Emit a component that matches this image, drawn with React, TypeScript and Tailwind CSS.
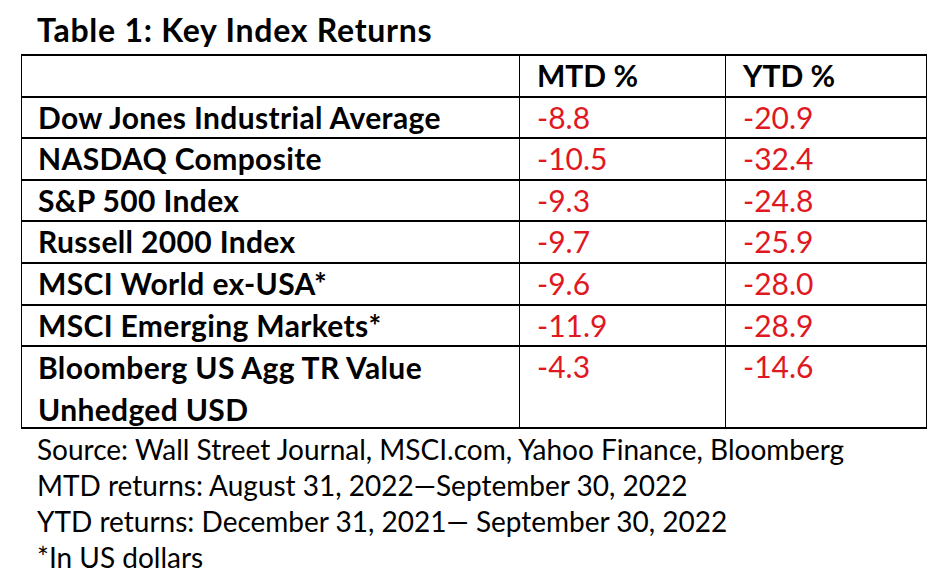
const rows = [
  { name: 'Dow Jones Industrial Average', mtd: '-8.8', ytd: '-20.9' },
  { name: 'NASDAQ Composite', mtd: '-10.5', ytd: '-32.4' },
  { name: 'S&P 500 Index', mtd: '-9.3', ytd: '-24.8' },
  { name: 'Russell 2000 Index', mtd: '-9.7', ytd: '-25.9' },
  { name: 'MSCI World ex-USA*', mtd: '-9.6', ytd: '-28.0' },
  { name: 'MSCI Emerging Markets*', mtd: '-11.9', ytd: '-28.9' },
];

const grid = 'grid grid-cols-[497px_206px_203px] border-b-2 border-black';

export default function App() {
  return (
    <div className="w-[945px] h-[582px] bg-white text-black font-['Lato','Open_Sans',sans-serif] text-[30px]">
      <div className="pl-[37px] pt-[12px] text-[32px] font-bold leading-[36px] tracking-[0.75px]">
        Table 1: Key Index Returns
      </div>

      <div className="mt-[6px] ml-[21px] w-[906px] border-t-2 border-x border-black">
        <div className={grid}>
          <div className="h-[39.6px]" />
          <div className="h-[39.6px] border-l border-black pl-[17px] font-bold leading-[39px]">MTD %</div>
          <div className="h-[39.6px] border-l border-black pl-[17px] font-bold leading-[39px]">YTD %</div>
        </div>

        {rows.map((r) => (
          <div key={r.name} className={grid}>
            <div className="h-[39.6px] pl-[16px] font-bold leading-[39px] tracking-[0.35px]">{r.name}</div>
            <div className="h-[39.6px] border-l border-black pl-[17px] leading-[39px] text-[#e0181f]">{r.mtd}</div>
            <div className="h-[39.6px] border-l border-black pl-[17px] leading-[39px] text-[#e0181f]">{r.ytd}</div>
          </div>
        ))}

        <div className={grid}>
          <div className="h-[80px] pl-[16px] font-bold leading-[42px] tracking-[0.35px] -mt-[1px]">
            Bloomberg US Agg TR Value
            <br />
            Unhedged USD
          </div>
          <div className="h-[80px] border-l border-black pl-[17px] leading-[39px] text-[#e0181f]">-4.3</div>
          <div className="h-[80px] border-l border-black pl-[17px] leading-[39px] text-[#e0181f]">-14.6</div>
        </div>
      </div>

      <div className="mt-[2px] pl-[37px] text-[28px] leading-[36px]">
        <p>Source: Wall Street Journal, MSCI.com, Yahoo Finance, Bloomberg</p>
        <p>MTD returns: August 31, 2022—September 30, 2022</p>
        <p>YTD returns: December 31, 2021— September 30, 2022</p>
        <p>*In US dollars</p>
      </div>
    </div>
  );
}
